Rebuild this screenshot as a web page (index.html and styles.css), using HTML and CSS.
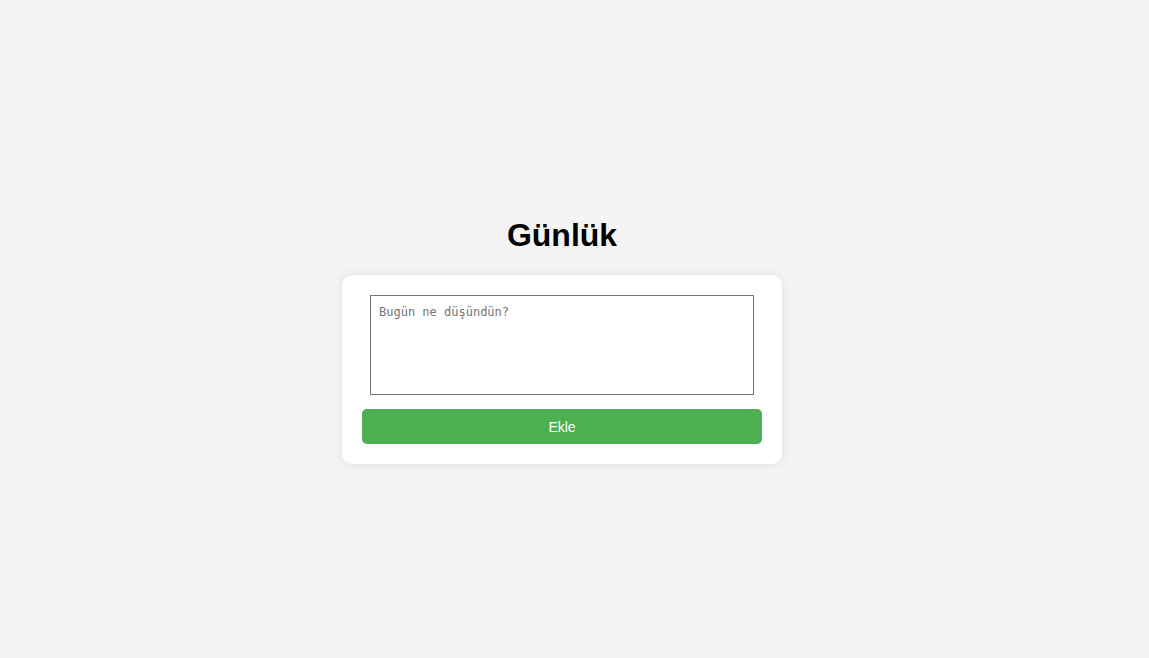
FILE: index.html
```html
<!DOCTYPE html>
<html lang="tr">
<head>
<meta charset="utf-8">
<title>Günlük</title>
<link rel="stylesheet" href="styles.css">
</head>
<body>
<main class="page">
  <h1 class="title">Günlük</h1>
  <form class="card">
    <textarea class="entry" placeholder="Bugün ne düşündün?"></textarea>
    <button type="button" class="add-btn">Ekle</button>
  </form>
</main>
</body>
</html>
```
FILE: styles.css
```css
html, body {
  margin: 0;
  padding: 0;
}
body {
  background: #f4f4f4;
  font-family: "Liberation Sans", Arial, sans-serif;
}
.page {
  height: 100vh;
  box-sizing: border-box;
  padding-right: 25px;
  padding-top: 2px;
  display: flex;
  flex-direction: column;
  align-items: center;
  justify-content: center;
}
.title {
  font-size: 32px;
  font-weight: bold;
  margin: 21.44px 0;
  line-height: 37px;
  color: #000;
}
.card {
  width: 440px;
  box-sizing: border-box;
  background: #fff;
  padding: 20px;
  border-radius: 10px;
  box-shadow: 0 0 10px rgba(0, 0, 0, 0.1);
  display: flex;
  flex-direction: column;
  align-items: center;
  gap: 14px;
}
.entry {
  display: block;
  width: 384px;
  height: 100px;
  box-sizing: border-box;
  margin: 0;
  padding: 9px 8px 8px;
  border: 1px solid #767676;
  border-radius: 0;
  font-family: "DejaVu Sans Mono", "Liberation Mono", monospace;
  font-size: 12px;
  resize: none;
}
.entry::placeholder {
  color: #757575;
}
.add-btn {
  width: 400px;
  height: 35px;
  border: none;
  border-radius: 5px;
  background: #4caf50;
  color: #fff;
  font-family: "Liberation Sans", Arial, sans-serif;
  font-size: 14px;
  cursor: pointer;
}
```
